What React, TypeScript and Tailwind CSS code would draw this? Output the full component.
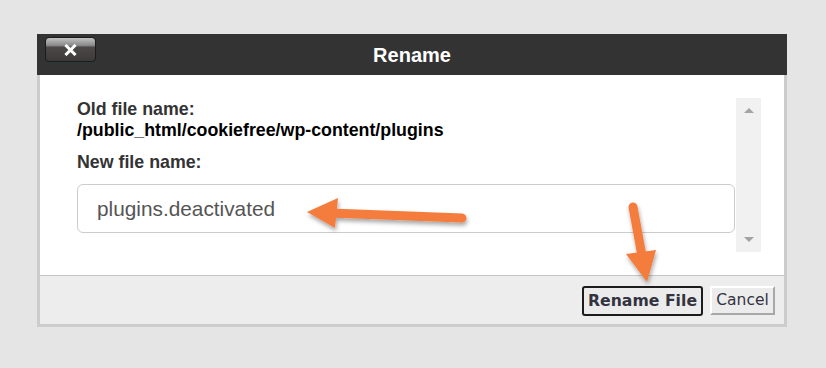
import React from "react";

const ORANGE = "#f47b3c";

// orange callout arrows drawn over the dialog (page coordinates shifted by the dialog offset)
const Arrows = () => (
  <svg
    className="absolute left-0 top-0 h-full w-full pointer-events-none overflow-visible"
    width="750"
    height="293"
  >
    <defs>
      <filter id="shadow" x="-20%" y="-20%" width="140%" height="160%">
        <feDropShadow dx="1" dy="3" stdDeviation="2" floodColor="#000" floodOpacity="0.35" />
      </filter>
    </defs>
    <g transform="translate(-37,-34)" filter="url(#shadow)" fill={ORANGE}>
      <line x1="462" y1="218" x2="330" y2="213" stroke={ORANGE} strokeWidth="9" strokeLinecap="round" />
      <polygon points="307,212 338,198 335,228" />
      <line x1="633" y1="207" x2="642" y2="256" stroke={ORANGE} strokeWidth="9" strokeLinecap="round" />
      <polygon points="647,282 626,254 656,250" />
    </g>
  </svg>
);

export default function App() {
  return (
    <div
      className="min-h-[368px] w-full bg-[#e5e5e5] pt-[34px] pl-[37px]"
      style={{ fontFamily: '"Liberation Sans", Arial, sans-serif' }}
    >
      <div className="relative w-[750px]">
        {/* header */}
        <div className="grid h-[41px] grid-cols-[1fr_auto_1fr] bg-[#333333]">
          <div className="pt-[3px] pl-[8px]">
            <button className="flex h-[25px] w-[51px] items-center justify-center rounded-[4px] border border-[#1a1c1c] bg-[linear-gradient(to_bottom,#c2c2c2_0%,#8a8a8a_32%,#4c4848_40%,#3e3a3a_100%)] shadow-[0_1px_0_#2a3a3c]">
              <svg width="13" height="12" viewBox="0 0 13 12">
                <path d="M2.5 2 L10.5 10 M10.5 2 L2.5 10" stroke="#fff" strokeWidth="3" strokeLinecap="square" />
              </svg>
            </button>
          </div>
          <div className="flex items-center text-[20px] font-bold text-white">Rename</div>
          <div />
        </div>

        {/* body */}
        <div className="flex h-[200px] border-x-[3px] border-[#cccccc] bg-white">
          <div className="flex-1 pt-[24px] pl-[37px] text-[17.8px] font-bold leading-[21px]">
            <div className="text-[#333333]">Old file name:</div>
            <div className="text-black">/public_html/cookiefree/wp-content/plugins</div>
            <div className="mt-[11px] text-[#333333]">New file name:</div>
            <div className="mt-[11px] flex h-[49px] items-center rounded-[6px] border border-[#cccccc] pl-[19px] text-[20.8px] font-normal text-[#555555]">
              plugins.deactivated
            </div>
          </div>
          <div className="mt-[23px] ml-[1px] flex h-[154px] w-[25px] flex-col items-center justify-between bg-[#f1f1f1] py-[10px]">
            <div className="h-0 w-0 border-x-[5px] border-b-[5px] border-x-transparent border-b-[#a3a3a3]" />
            <div className="h-0 w-0 border-x-[5px] border-t-[5px] border-x-transparent border-t-[#a3a3a3]" />
          </div>
          <div className="w-[23px]" />
        </div>

        {/* footer */}
        <div className="flex h-[52px] justify-end gap-[7px] border-x-[3px] border-b-[3px] border-t border-[#cccccc] border-t-[#c6c6c6] bg-[#ededed] pt-[10px] pr-[9px]">
          <button
            className="h-[30px] w-[121px] rounded-[3px] border-2 border-[#1c1c1c] bg-[#ebebeb] text-[15.7px] font-bold text-[#333340]"
            style={{ fontFamily: '"DejaVu Sans", Verdana, sans-serif' }}
          >
            Rename File
          </button>
          <button
            className="h-[29px] w-[65px] border-2 border-t-white border-l-white border-r-[#a8a8a8] border-b-[#a8a8a8] bg-[#ececec] text-[15.5px] text-[#333340]"
            style={{ fontFamily: '"DejaVu Sans", Verdana, sans-serif' }}
          >
            Cancel
          </button>
        </div>

        <Arrows />
      </div>
    </div>
  );
}
